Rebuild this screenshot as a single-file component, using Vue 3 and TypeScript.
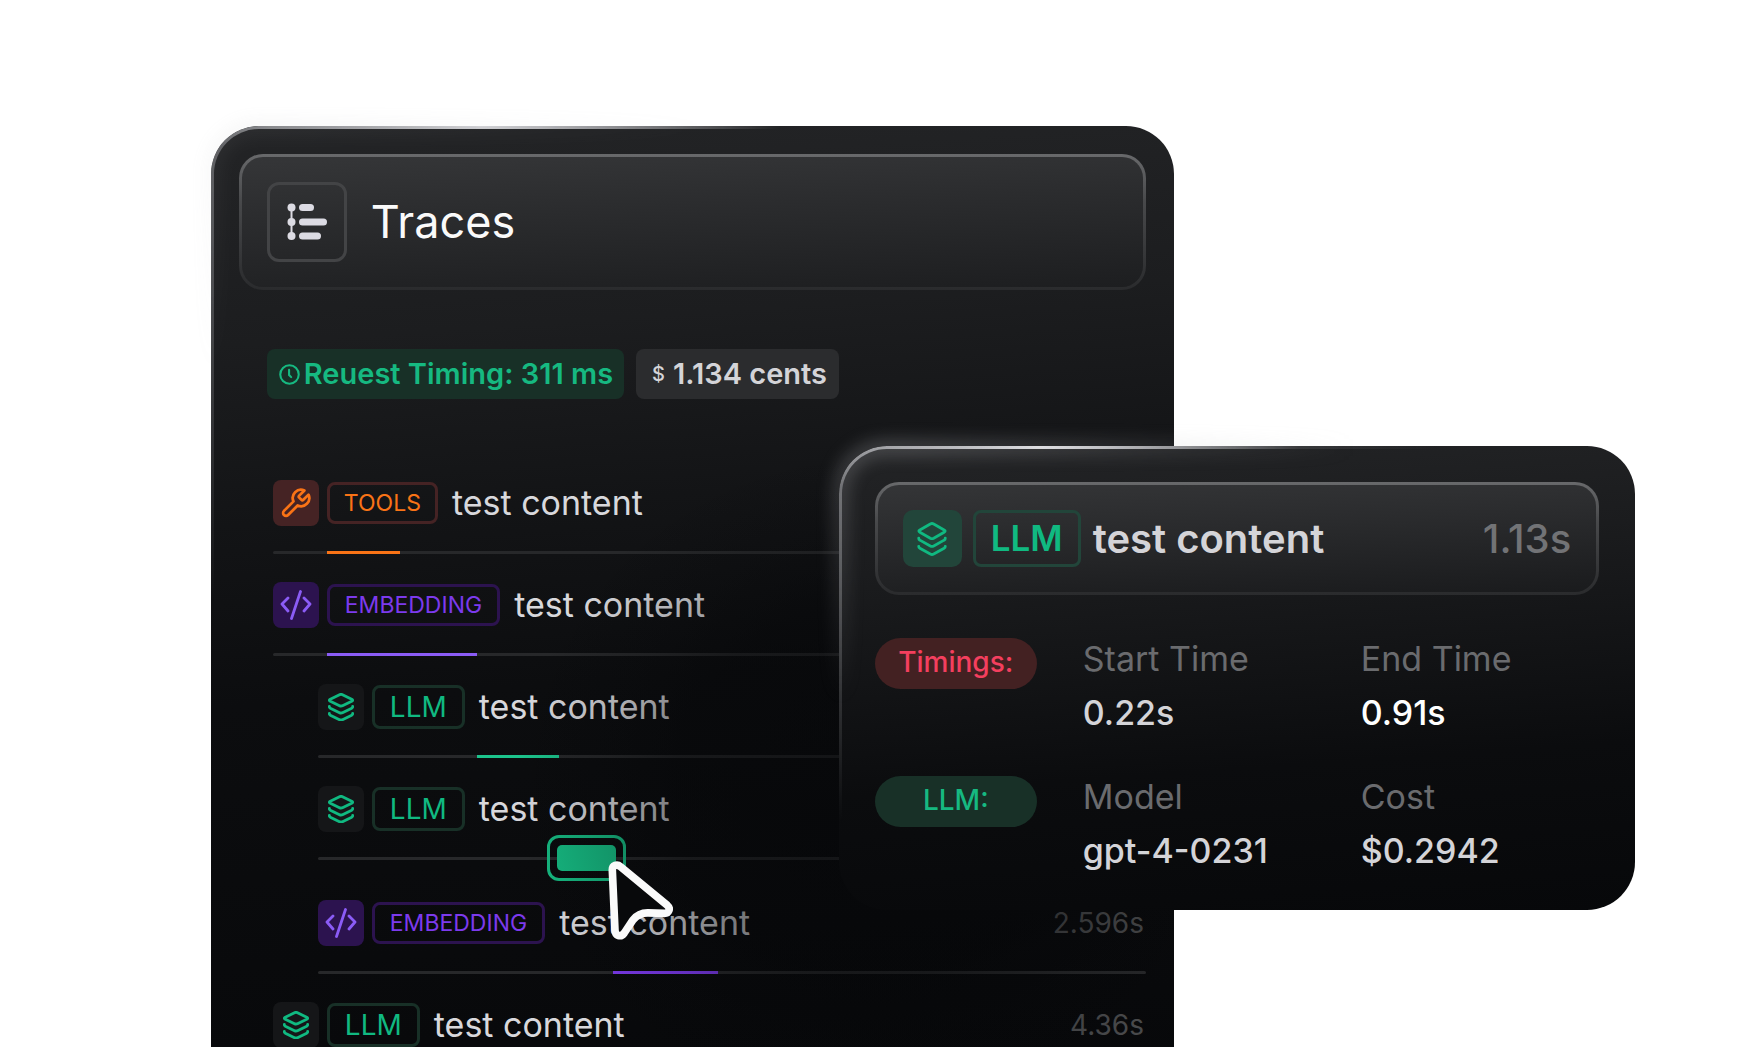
<script setup lang="ts">
type Kind = 'tools' | 'embedding' | 'llm'

interface Span {
  id: number
  kind: Kind
  tag: string
  name: string
  time?: string
  nested?: boolean
  selected?: boolean
  // position of the timing bar along the track, in percent
  start?: number
  length?: number
}

const spans: Span[] = [
  { id: 1, kind: 'tools', tag: 'TOOLS', name: 'test content', start: 6.2, length: 8.4 },
  { id: 2, kind: 'embedding', tag: 'EMBEDDING', name: 'test content', start: 6.2, length: 17.2 },
  { id: 3, kind: 'llm', tag: 'LLM', name: 'test content', nested: true, start: 19.2, length: 9.9 },
  { id: 4, kind: 'llm', tag: 'LLM', name: 'test content', nested: true, selected: true, start: 27.7, length: 9.5 },
  { id: 5, kind: 'embedding', tag: 'EMBEDDING', name: 'test content', time: '2.596s', nested: true, start: 35.7, length: 12.6 },
  { id: 6, kind: 'llm', tag: 'LLM', name: 'test content', time: '4.36s' },
]

const details = [
  {
    label: 'Timings:',
    tone: 'red',
    fields: [
      { term: 'Start Time', value: '0.22s' },
      { term: 'End Time', value: '0.91s', strong: true },
    ],
  },
  {
    label: 'LLM:',
    tone: 'green',
    fields: [
      { term: 'Model', value: 'gpt-4-0231' },
      { term: 'Cost', value: '$0.2942' },
    ],
  },
]
</script>

<template>
  <main class="stage">
    <section class="panel">
      <span class="glow" aria-hidden="true"></span>
      <header class="card title-card">
        <span class="title-icon">
          <svg width="40" height="38" viewBox="0 0 40 38" fill="#dcdbe3" aria-hidden="true">
            <path d="M4.5 4.5v29" stroke="#dcdbe3" stroke-width="2" />
            <circle cx="4.5" cy="4.5" r="4" />
            <circle cx="4.5" cy="19" r="4" />
            <circle cx="4.5" cy="33" r="4" />
            <rect x="12" y="1" width="15" height="7" rx="3.5" />
            <rect x="12" y="15.5" width="28" height="7" rx="3.5" />
            <rect x="12" y="29.5" width="22" height="7" rx="3.5" />
          </svg>
        </span>
        <h1>Traces</h1>
      </header>

      <div class="chips">
        <span class="chip chip-green">
          <svg width="21" height="21" viewBox="0 0 20 20" fill="none" stroke="currentColor" stroke-width="2" stroke-linecap="round" aria-hidden="true">
            <circle cx="10" cy="10" r="8.800" />
            <path d="M9.600 5.500v5l2 2" />
          </svg>
          <span>Reuest Timing: 311 ms</span>
        </span>
        <span class="chip chip-grey"><span class="dollar">$</span><span>1.134 cents</span></span>
      </div>

      <ul class="spans">
        <li v-for="s in spans" :key="s.id" :class="['span', s.kind, { nested: s.nested, selected: s.selected }]">
          <div class="row">
            <span class="icon">
              <svg v-if="s.kind === 'tools'" width="33" height="33" viewBox="0 0 24 24" fill="none" stroke="currentColor" stroke-width="2" stroke-linecap="round" stroke-linejoin="round" aria-hidden="true">
                <path d="M14.700 6.300a1 1 0 0 0 0 1.400l1.600 1.600a1 1 0 0 0 1.400 0l3.770-3.770a6 6 0 0 1-7.940 7.940l-6.910 6.910a2.120 2.120 0 0 1-3-3l6.910-6.910a6 6 0 0 1 7.940-7.940l-3.760 3.760z" />
              </svg>
              <svg v-else-if="s.kind === 'embedding'" width="32" height="30" viewBox="0 0 32 30" fill="none" stroke="currentColor" stroke-width="2.800" stroke-linecap="round" stroke-linejoin="round" aria-hidden="true">
                <path d="M8 8 2 14l6 7M24 8l6 6-6 7M20.500 1.500l-9 27" />
              </svg>
              <svg v-else width="26" height="28" viewBox="0 0 26 28" fill="none" stroke="currentColor" stroke-width="2.900" stroke-linecap="round" stroke-linejoin="round" aria-hidden="true">
                <path d="M11.500 1.700 2.300 6.200q-1.800 1 0 2l9.200 4.500q1.500.7 3 0l9.200-4.500q1.800-1 0-2l-9.200-4.500q-1.500-.7-3 0z" />
                <path d="M1.300 13.500q0 1.200 1 1.700l9.200 4.500q1.500.7 3 0l9.200-4.500q1-.5 1-1.700" />
                <path d="M1.300 20.500q0 1.200 1 1.700l9.200 4.500q1.500.7 3 0l9.200-4.500q1-.5 1-1.700" />
              </svg>
            </span>
            <span class="tag">{{ s.tag }}</span>
            <span class="name">{{ s.name }}</span>
            <span v-if="s.time" class="time">{{ s.time }}</span>
          </div>
          <div class="track">
            <span v-if="s.length" class="bar" :style="{ left: s.start + '%', width: s.length + '%' }"></span>
            <svg v-if="s.selected" class="cursor" width="65" height="79" viewBox="0 0 68 82" fill="#08090b" stroke="#fafafa" stroke-width="8" stroke-linejoin="round" aria-hidden="true">
              <path d="M4.500 9c0-5 5-6.500 8.500-3.500l49 40.500c4 3.500 1.500 8.500-3 8.500l-17-.5c-7-.2-12 2.500-16 7.500l-9 13.500c-3.500 5-9.500 3-9.700-3z" />
            </svg>
          </div>
        </li>
      </ul>
    </section>

    <aside class="popover">
      <span class="glow" aria-hidden="true"></span>
      <header class="card span-card llm">
        <span class="icon">
          <svg width="30" height="34" viewBox="0 0 26 30" fill="none" stroke="currentColor" stroke-width="2.500" stroke-linecap="round" stroke-linejoin="round" aria-hidden="true">
            <path d="M11.500 1.700 2.300 7q-1.800 1 0 2l9.200 5.300q1.500.7 3 0L23.700 9q1.800-1 0-2l-9.200-5.300q-1.500-.7-3 0z" />
            <path d="M1.300 14.300q0 1.200 1 1.700l9.200 5.100q1.500.7 3 0l9.200-5.100q1-.5 1-1.700" />
            <path d="M1.300 21.500q0 1.200 1 1.700l9.200 5.100q1.500.7 3 0l9.200-5.100q1-.5 1-1.700" />
          </svg>
        </span>
        <span class="tag">LLM</span>
        <h2>test content</h2>
        <span class="total">1.13s</span>
      </header>

      <div class="details">
        <div v-for="d in details" :key="d.label" class="detail">
          <span :class="['pill', d.tone]">{{ d.label }}</span>
          <dl>
            <div v-for="f in d.fields" :key="f.term">
              <dt>{{ f.term }}</dt>
              <dd :class="{ strong: f.strong }">{{ f.value }}</dd>
            </div>
          </dl>
        </div>
      </div>
    </aside>
  </main>
</template>

<style>
body {
  margin: 0;
  background: #fff;
}
</style>

<style scoped>
.stage {
  position: relative;
  box-sizing: border-box;
  height: 100vh;
  padding-top: 126px;
  overflow: hidden;
  font-family: Inter, "Liberation Sans", sans-serif;
  color: #d4d4d8;
}

.panel {
  position: relative;
  box-sizing: border-box;
  width: 54.6%;
  min-height: 100%;
  margin-left: 11.95%;
  padding: 28px 28px 0;
  border-radius: 48px 48px 0 0;
  background: linear-gradient(176deg, #232426 0, #1c1d1f 220px, #131416 400px, #0c0d0f 580px, #07080a 100%);
}

/* darkness cast by the popover on the rows beneath it */
.panel::after {
  content: "";
  position: absolute;
  inset: 0;
  background: radial-gradient(360px 340px at 69% 664px, rgba(5, 6, 8, 0.6) 0, rgba(5, 6, 8, 0.45) 55%, rgba(5, 6, 8, 0.2) 75%, transparent 100%);
  pointer-events: none;
}

/* lit rim at the upper left edge: a sharp line plus a soft glow */
.panel::before,
.popover::before,
.glow::before {
  content: "";
  position: absolute;
  inset: 0;
  padding: 3px;
  border-radius: inherit;
  background:
    radial-gradient(260px 60px at 200px 0, rgba(240, 240, 244, 0.95), transparent),
    radial-gradient(540px 380px at 60px 0, rgba(150, 151, 155, 0.7), transparent);
  mask: linear-gradient(#000 0 0) content-box exclude, linear-gradient(#000 0 0);
  pointer-events: none;
}

.panel::before {
  background:
    radial-gradient(300px 40px at 270px 0, rgba(236, 236, 240, 0.85), transparent),
    radial-gradient(500px 480px at 60px 0, rgba(130, 131, 135, 0.7), transparent);
}

.glow {
  position: absolute;
  inset: 0;
  border-radius: inherit;
  filter: blur(9px);
  pointer-events: none;
}

.glow::before {
  inset: -3px;
  padding: 9px;
  background: radial-gradient(460px 260px at 60px 0, rgba(170, 171, 175, 0.55), transparent);
}

.panel .glow {
  opacity: 0.3;
}

.card {
  position: relative;
  display: flex;
  align-items: center;
  box-sizing: border-box;
  border: 3px solid transparent;
  border-radius: 24px;
  background:
    linear-gradient(178deg, #353638, #2b2c2e 40%, #1d1e20) padding-box,
    linear-gradient(#68696b, #48494b 35%, #2a2b2d) border-box;
}

.title-card {
  height: 136px;
  padding: 0 25px;
  gap: 24px;
}

.title-icon {
  display: grid;
  place-items: center;
  box-sizing: border-box;
  width: 80px;
  height: 80px;
  border: 3px solid #434446;
  border-radius: 12px;
}

h1 {
  margin: 0;
  font-size: 45px;
  font-weight: 400;
  line-height: 56px;
  color: #fafafa;
}

.chips {
  display: flex;
  gap: 12px;
  margin: 59px 0 0 28px;
}

.chip {
  display: flex;
  align-items: center;
  height: 50px;
  border-radius: 8px;
  font-size: 29px;
  font-weight: 600;
  line-height: 48px;
  white-space: nowrap;
}

.chip-green {
  gap: 4px;
  padding: 0 11px 0 12px;
  background: #183027;
  color: #16b981;
}

.chip-grey {
  gap: 8px;
  padding: 0 12px 0 16px;
  background: #2b2c2e;
}

.dollar {
  font-size: 20px;
  font-weight: 500;
}

.spans {
  margin: 81px 0 0 34px;
  padding: 0;
  list-style: none;
}

.span {
  margin-bottom: 28px;
}

.span.nested {
  margin-left: 45px;
}

.span.selected {
  margin-bottom: 40px;
}

.row {
  display: flex;
  align-items: center;
  height: 46px;
}

.icon {
  display: grid;
  place-items: center;
  width: 46px;
  height: 46px;
  border-radius: 8px;
}

.tag {
  box-sizing: border-box;
  margin: 0 14px 0 8px;
  padding: 0 14px;
  border: 3px solid;
  border-radius: 8px;
  font-size: 23px;
  line-height: 36px;
}

.name {
  font-size: 34px;
  line-height: 42px;
  color: #d8d8dc;
}

.time {
  margin-left: auto;
  padding-right: 2px;
  font-size: 28px;
  color: #48494b;
}

.tools .icon { background: #452324; color: #f97316; }
.tools .tag { border-color: #452324; color: #f97316; }
.embedding .icon { background: #2c134f; color: #8b5cf6; }
.embedding .tag { padding: 0 15px; border-color: #2c134f; color: #7c3aed; }
.llm .icon { background: #151618; color: #10b981; }
.llm .tag { padding: 0 15px; border-color: #183027; color: #10b981; font-size: 28px; line-height: 38px; }

.track {
  position: relative;
  height: 3px;
  margin-top: 25px;
  border-radius: 2px;
  background: #27282a;
}

.bar {
  position: absolute;
  top: 0;
  height: 3px;
  background: currentColor;
}

.tools .bar { color: #f97316; }
.embedding .bar { color: #8b5cf6; }
.nested.embedding .bar { color: #7c3aed; }
.llm .bar { color: #1cc48c; }

.selected .bar {
  box-sizing: border-box;
  top: -22px;
  height: 46px;
  padding: 7px;
  border: 3px solid #16b981;
  border-radius: 12px;
  background: none;
}

.selected .bar::before {
  content: "";
  display: block;
  height: 100%;
  border-radius: 5px;
  background: #16b981;
}

.cursor {
  position: absolute;
  z-index: 2;
  top: 4px;
  left: 35%;
}

.popover {
  position: absolute;
  top: 446px;
  left: 47.55%;
  z-index: 3;
  box-sizing: border-box;
  width: 45.15%;
  padding: 36px 36px 38px;
  border-radius: 48px;
  background: linear-gradient(176deg, #232426 0, #1b1c1e 130px, #131416 240px, #0b0c0e 350px, #07080a 100%);
}

.span-card {
  height: 113px;
  padding: 0 25px;
  background:
    linear-gradient(178deg, #343537, #2a2b2d 40%, #1a1b1d) padding-box,
    linear-gradient(#68696b, #48494b 35%, #2a2b2d) border-box;
}

.span-card .icon {
  width: 59px;
  height: 57px;
  border-radius: 10px;
  background: #22453a;
}

.span-card .tag {
  margin: 0 12px 0 11px;
  border-color: #22453a;
  font-size: 35px;
  font-weight: 600;
  line-height: 51px;
}

h2 {
  margin: 0;
  font-size: 40px;
  font-weight: 600;
  line-height: 48px;
  white-space: nowrap;
}

.total {
  margin-left: auto;
  font-size: 40px;
  font-weight: 500;
  color: #727376;
}

.details {
  display: grid;
  gap: 42px;
  margin-top: 43px;
}

.detail {
  display: flex;
  gap: 46px;
}

.pill {
  box-sizing: border-box;
  width: 162px;
  height: 51px;
  border-radius: 26px;
  font-size: 28px;
  font-weight: 500;
  line-height: 49px;
  text-align: center;
}

.red { background: #432122; color: #f43f5e; }
.green { background: #183027; color: #16b981; }

dl {
  display: grid;
  flex: 1;
  grid-template-columns: 278px 1fr;
  margin: 0;
}

dt {
  font-size: 34px;
  line-height: 42px;
  color: #6a6b6e;
}

dd {
  margin: 12px 0 0;
  font-size: 34px;
  font-weight: 500;
  line-height: 42px;
}

.strong { color: #fff; }
</style>
